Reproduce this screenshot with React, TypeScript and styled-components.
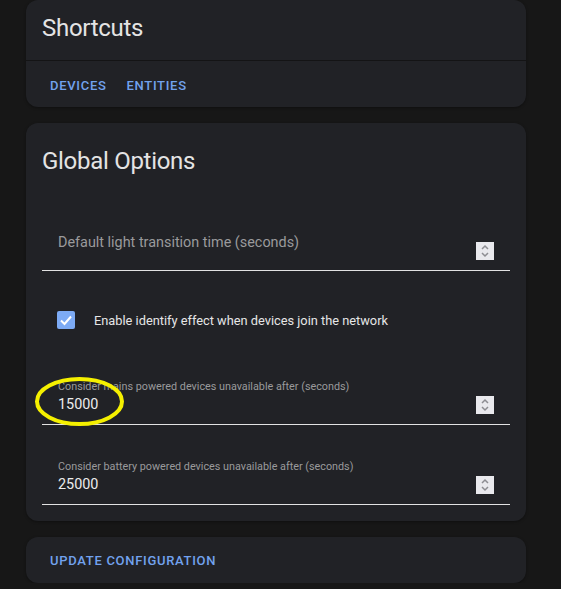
import React from "react";
import styled, { createGlobalStyle } from "styled-components";

const Global = createGlobalStyle`
  html, body {
    margin: 0;
    padding: 0;
    background: #171717;
    font-family: Roboto, "Noto Sans", sans-serif;
    -webkit-font-smoothing: antialiased;
  }
`;

const Page = styled.div`
  display: flex;
  flex-direction: column;
  gap: 16px;
  padding: 0 35px 0 26px;
  width: 500px;
`;

const Card = styled.section`
  background: #212226;
  border-radius: 12px;
  box-shadow: 0 1px 3px rgba(0, 0, 0, 0.35);
  display: flex;
  flex-direction: column;
`;

const Title = styled.h1<{ $top: number; $bottom: number }>`
  margin: 0;
  padding: ${(p) => p.$top}px 16px ${(p) => p.$bottom}px;
  font-size: 24px;
  line-height: 32px;
  font-weight: 400;
  letter-spacing: -0.012em;
  color: #e4e4e4;
`;

const Divider = styled.div`
  height: 1px;
  background: #141415;
`;

const Actions = styled.div<{ $top: number; $bottom: number }>`
  display: flex;
  gap: 4px;
  padding: ${(p) => p.$top}px 16px ${(p) => p.$bottom}px;
`;

const TextButton = styled.button`
  height: 36px;
  padding: 0 8px;
  border: none;
  background: transparent;
  color: #72a2ee;
  font-family: Roboto, sans-serif;
  font-size: 13px;
  font-weight: 500;
  letter-spacing: 0.7px;
  text-transform: uppercase;
  cursor: pointer;
`;

const Body = styled.div`
  display: flex;
  flex-direction: column;
  padding: 37px 16px 16px;
`;

const Field = styled.div<{ $mt: number }>`
  position: relative;
  display: flex;
  align-items: flex-start;
  height: 56px;
  padding: 0 16px;
  margin-top: ${(p) => p.$mt}px;
  border-bottom: 1px solid #e2e2e2;
`;

const FieldText = styled.div`
  flex: 1;
  display: flex;
  flex-direction: column;
  min-width: 0;
`;

const FloatLabel = styled.div`
  margin-top: 12px;
  font-size: 10.8px;
  line-height: 14px;
  color: #9a9a9c;
  white-space: nowrap;
`;

const RestLabel = styled.div`
  font-size: 14.4px;
  line-height: 58px;
  color: #9a9a9c;
  white-space: nowrap;
`;

const Value = styled.div`
  margin-top: 1px;
  font-size: 14.4px;
  line-height: 20px;
  color: #ececec;
`;

const Spinner = styled.div`
  width: 18px;
  height: 18px;
  margin-top: 28px;
  background: #e9e9ed;
  display: flex;
  align-items: center;
  justify-content: center;
`;

const CheckRow = styled.label`
  display: flex;
  align-items: center;
  gap: 19px;
  height: 40px;
  padding-left: 15px;
  margin-top: 29px;
  font-size: 12.8px;
  color: #e6e6e6;
`;

const CheckBox = styled.span`
  width: 18px;
  height: 18px;
  border-radius: 2px;
  background: #7dabf5;
  display: flex;
  align-items: center;
  justify-content: center;
`;

const Marker = styled.svg`
  position: absolute;
  left: -8px;
  top: 8px;
  pointer-events: none;
`;

const SpinIcon = () => (
  <svg width="18" height="18" viewBox="0 0 18 18">
    <polyline points="6,7 9,4 12,7" fill="none" stroke="#8d8d92" strokeWidth="1.5" />
    <polyline points="6,11 9,14 12,11" fill="none" stroke="#8d8d92" strokeWidth="1.5" />
  </svg>
);

type NumberFieldProps = {
  label: string;
  value?: string;
  mt: number;
  marked?: boolean;
};

const NumberField = ({ label, value, mt, marked }: NumberFieldProps) => (
  <Field $mt={mt}>
    <FieldText>
      {value === undefined ? (
        <RestLabel>{label}</RestLabel>
      ) : (
        <>
          <FloatLabel>{label}</FloatLabel>
          <Value>{value}</Value>
        </>
      )}
    </FieldText>
    <Spinner>
      <SpinIcon />
    </Spinner>
    {marked && (
      <Marker width="91" height="51" viewBox="0 0 91 51">
        <ellipse cx="45.5" cy="25.5" rx="42.5" ry="22.5" fill="none" stroke="#f5f000" strokeWidth="4" />
      </Marker>
    )}
  </Field>
);

export default function App() {
  return (
    <>
      <Global />
      <Page>
        <Card>
          <Title $top={12} $bottom={16}>Shortcuts</Title>
          <Divider />
          <Actions $top={6} $bottom={4}>
            <TextButton>Devices</TextButton>
            <TextButton>Entities</TextButton>
          </Actions>
        </Card>
        <Card>
          <Title $top={22} $bottom={0}>Global Options</Title>
          <Body>
            <NumberField mt={0} label="Default light transition time (seconds)" />
            <CheckRow>
              <CheckBox>
                <svg width="18" height="18" viewBox="0 0 18 18">
                  <polyline points="4,9.5 7.5,13 14,5.5" fill="none" stroke="#ffffff" strokeWidth="2" />
                </svg>
              </CheckBox>
              Enable identify effect when devices join the network
            </CheckRow>
            <NumberField
              mt={28}
              label="Consider mains powered devices unavailable after (seconds)"
              value="15000"
              marked
            />
            <NumberField
              mt={23}
              label="Consider battery powered devices unavailable after (seconds)"
              value="25000"
            />
          </Body>
        </Card>
        <Card>
          <Actions $top={5} $bottom={5}>
            <TextButton>Update configuration</TextButton>
          </Actions>
        </Card>
      </Page>
    </>
  );
}
